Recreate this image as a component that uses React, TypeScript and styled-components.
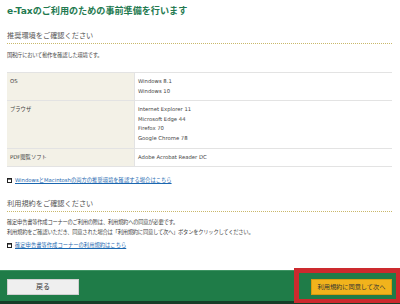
import React from 'react'
import styled, { createGlobalStyle } from 'styled-components'

const GlobalStyle = createGlobalStyle`
  html, body {
    margin: 0;
    padding: 0;
    background: #fff;
  }
  body {
    font-family: "DejaVu Sans", "Noto Sans CJK JP", sans-serif;
    color: #333;
  }
`

const Page = styled.div`
  width: 400px;
  height: 304px;
  display: flex;
  flex-direction: column;
  overflow: hidden;
`

const Content = styled.div`
  flex: 1;
  padding: 4px 8px 0 7px;
`

const Title = styled.h1`
  margin: 0;
  font-size: 9.1px;
  line-height: 14px;
  font-weight: bold;
  color: #237a50;
`

const SectionHeading = styled.h2<{ $top: number }>`
  margin: ${({ $top }) => $top}px 0 0;
  padding-bottom: 2px;
  font-size: 7.2px;
  line-height: 10px;
  font-weight: normal;
  color: #555;
  border-bottom: 1px dotted #c9b86a;
`

const Text = styled.p<{ $top: number }>`
  margin: ${({ $top }) => $top}px 0 0;
  font-size: 5.3px;
  line-height: 10px;
  letter-spacing: -0.25px;
  color: #444;
`

const EnvTable = styled.table`
  margin-top: 12px;
  width: 100%;
  border-collapse: collapse;
  font-size: 5.3px;
  line-height: 9.6px;
  color: #444;

  td {
    border-top: 1px solid #e3e3e3;
    border-bottom: 1px solid #e3e3e3;
    padding: 4px 3px;
    vertical-align: top;
  }
`

const LabelCell = styled.td`
  width: 121px;
  background: #f3f1e7;
  border-right: 1px solid #e3e3e3;
`

const LinkRow = styled.div<{ $top: number }>`
  margin-top: ${({ $top }) => $top}px;
  display: flex;
  align-items: center;
  gap: 3px;
  font-size: 5.3px;
  line-height: 10px;

  a {
    color: #1b67b0;
    text-decoration: underline;
  }
`

const Footer = styled.div`
  position: relative;
  height: 34px;
  padding: 8px 8px 0 7px;
  box-sizing: border-box;
  background: #1f7c48;
  border-top: 1px solid #3e9463;
  border-bottom: 3px solid #163d28;
  display: flex;
  justify-content: space-between;
  align-items: flex-start;
`

const Button = styled.button<{ $primary?: boolean }>`
  height: 16px;
  width: ${({ $primary }) => ($primary ? '81px' : '72px')};
  margin: 0;
  padding: 0;
  border: 1px solid ${({ $primary }) => ($primary ? '#d99a10' : '#d0d0d0')};
  background: ${({ $primary }) => ($primary ? '#f1b31c' : '#efefef')};
  color: #333;
  font-family: "DejaVu Sans", "Noto Sans CJK JP", sans-serif;
  font-size: ${({ $primary }) => ($primary ? '6.2px' : '7px')};
  line-height: 14px;
`

const Highlight = styled.div`
  position: absolute;
  left: 294px;
  top: -3px;
  right: 0;
  bottom: -2px;
  border-style: solid;
  border-color: #cc2a2e;
  border-width: 5px 4px 4px 5px;
  pointer-events: none;
`

const WindowIcon = () => (
  <svg width='5' height='5' viewBox='0 0 5 5'>
    <rect x='0.5' y='0.5' width='4' height='4' fill='none' stroke='#222' />
    <rect x='0' y='0' width='5' height='1.6' fill='#222' />
  </svg>
)

const envRows = [
  { label: 'OS', values: ['Windows 8.1', 'Windows 10'] },
  {
    label: 'ブラウザ',
    values: ['Internet Explorer 11', 'Microsoft Edge 44', 'Firefox 70', 'Google Chrome 78'],
  },
  { label: 'PDF閲覧ソフト', values: ['Adobe Acrobat Reader DC'] },
]

const App = () => {
  return (
    <Page>
      <GlobalStyle />
      <Content>
        <Title>e-Taxのご利用のための事前準備を行います</Title>

        <SectionHeading $top={13}>推奨環境をご確認ください</SectionHeading>
        <Text $top={6}>国税庁において動作を確認した環境です。</Text>

        <EnvTable>
          <tbody>
            {envRows.map((row) => (
              <tr key={row.label}>
                <LabelCell>{row.label}</LabelCell>
                <td>
                  {row.values.map((v) => (
                    <div key={v}>{v}</div>
                  ))}
                </td>
              </tr>
            ))}
          </tbody>
        </EnvTable>

        <LinkRow $top={8}>
          <WindowIcon />
          <a href='#'>WindowsとMacintoshの両方の推奨環境を確認する場合はこちら</a>
        </LinkRow>

        <SectionHeading $top={14}>利用規約をご確認ください</SectionHeading>
        <Text $top={5}>
          確定申告書等作成コーナーのご利用の際は、利用規約への同意が必要です。
          <br />
          利用規約をご確認いただき、同意された場合は「利用規約に同意して次へ」ボタンをクリックしてください。
        </Text>

        <LinkRow $top={3}>
          <WindowIcon />
          <a href='#'>確定申告書等作成コーナーの利用規約はこちら</a>
        </LinkRow>
      </Content>

      <Footer>
        <Button>戻る</Button>
        <Button $primary>利用規約に同意して次へ</Button>
        <Highlight />
      </Footer>
    </Page>
  )
}

export default App
